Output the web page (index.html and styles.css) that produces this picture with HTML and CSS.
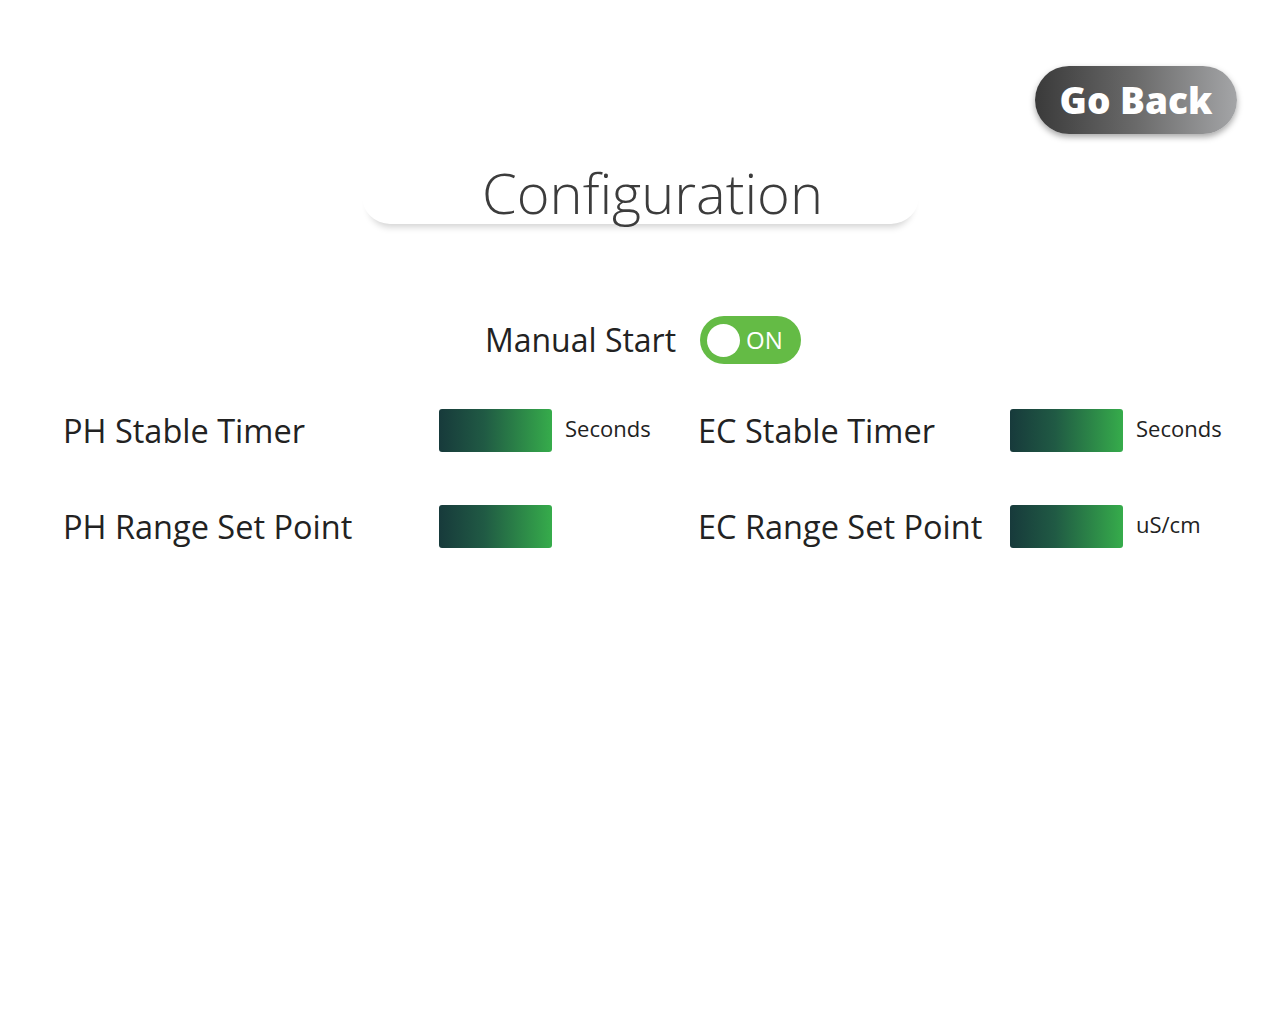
FILE: index.html
```html
<!DOCTYPE html>
<html>
<head>
<meta charset="utf-8">
<link rel="stylesheet" href="styles.css">
</head>
<body>
<div class="page">
  <div class="topbar">
    <button class="back-btn">Go Back</button>
  </div>
  <div class="title-card"><h1 class="title">Configuration</h1></div>
  <div class="manual-row">
    <span class="manual-label">Manual Start</span>
    <div class="toggle"><span class="knob"></span><span class="toggle-text">ON</span></div>
  </div>
  <div class="settings">
    <div class="label">PH Stable Timer</div>
    <div class="field"></div>
    <div class="unit">Seconds</div>
    <div class="label">EC Stable Timer</div>
    <div class="field"></div>
    <div class="unit">Seconds</div>

    <div class="label">PH Range Set Point</div>
    <div class="field"></div>
    <div class="unit"></div>
    <div class="label">EC Range Set Point</div>
    <div class="field"></div>
    <div class="unit">uS/cm</div>
  </div>
</div>
</body>
</html>
```

FILE: styles.css
```css
html, body {
  margin: 0;
  padding: 0;
  background: #ffffff;
}
body {
  font-family: "Open Sans", "Noto Sans", sans-serif;
  color: #222222;
}
.page {
  width: 1281px;
  min-height: 1025px;
}
.topbar {
  display: flex;
  justify-content: flex-end;
  padding: 66px 44px 0 0;
}
.back-btn {
  width: 202px;
  height: 68px;
  border: none;
  border-radius: 34px;
  background: linear-gradient(90deg, #3a3a3a 0%, #6a6a6a 50%, #a4a5a7 100%);
  color: #ffffff;
  font-family: "Open Sans", sans-serif;
  font-weight: 800;
  font-size: 37px;
  line-height: 64px;
  box-shadow: 0 3px 6px rgba(0,0,0,0.35);
  padding: 0;
  cursor: pointer;
}
.title-card {
  width: 557px;
  height: 66px;
  margin: 24px auto 0 auto;
  box-sizing: border-box;
  padding-left: 24px;
  border-radius: 0 0 28px 28px;
  background: #ffffff;
  box-shadow: 0 10px 7px -7px rgba(0,0,0,0.18);
  display: flex;
  justify-content: center;
  align-items: flex-end;
}
.title {
  margin: 0;
  font-family: "Open Sans", sans-serif;
  font-weight: 300;
  font-size: 56px;
  line-height: 64px;
  color: #3c3c3c;
}
.manual-row {
  display: flex;
  justify-content: center;
  align-items: center;
  gap: 24px;
  margin-top: 92px;
  padding-left: 5px;
}
.manual-label {
  font-size: 32px;
  line-height: 48px;
  color: #222222;
}
.toggle {
  width: 101px;
  height: 48px;
  border-radius: 24px;
  background: #64bb45;
  display: flex;
  align-items: center;
  box-sizing: border-box;
  padding-left: 7px;
  gap: 6px;
}
.knob {
  width: 33px;
  height: 33px;
  border-radius: 50%;
  background: #ffffff;
}
.toggle-text {
  color: #ffffff;
  font-size: 24px;
  line-height: 1;
}
.settings {
  display: grid;
  grid-template-columns: 376px 113px 146px 312px 113px auto;
  grid-auto-rows: 43px;
  row-gap: 53px;
  align-items: center;
  padding-left: 63px;
  margin-top: 45px;
}
.label {
  font-size: 32.5px;
  line-height: 43px;
  color: #222222;
  white-space: nowrap;
}
.field {
  height: 43px;
  border-radius: 3px;
  background: linear-gradient(90deg, #173a3b 0%, #205a44 40%, #36ac4b 100%);
}
.unit {
  padding-left: 13px;
  padding-bottom: 5px;
  font-size: 22px;
  color: #222222;
}
```
